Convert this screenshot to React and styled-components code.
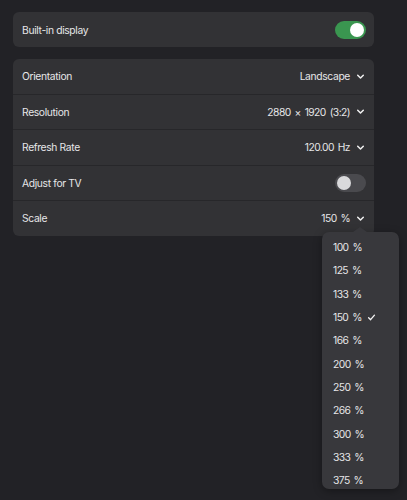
import styled, { createGlobalStyle } from "styled-components";

const Global = createGlobalStyle`
  html, body {
    margin: 0;
    padding: 0;
    background: #222226;
  }
  body {
    font-family: Inter, "Noto Sans", sans-serif;
    color: #e6e6e8;
    -webkit-font-smoothing: antialiased;
  }
`;

const Page = styled.div`
  position: relative;
  width: 407px;
  height: 500px;
  padding: 12px 13px;
  box-sizing: border-box;
  display: flex;
  flex-direction: column;
  gap: 11.5px;
`;

const Card = styled.div`
  width: 361px;
  background: #323235;
  border-radius: 6px;
  display: flex;
  flex-direction: column;
  overflow: hidden;
`;

const Row = styled.div`
  height: ${(p) => (p.$first ? "35px" : "35.5px")};
  box-sizing: border-box;
  display: flex;
  align-items: center;
  justify-content: space-between;
  padding: 0 8px 0 9px;
  font-size: 10.3px;
  letter-spacing: -0.35px;
  border-top: ${(p) => (p.$first ? "none" : "1px solid #27272a")};
`;

const Value = styled.div`
  display: flex;
  align-items: center;
  gap: 6px;
  padding-right: 1px;
  letter-spacing: ${(p) => (p.$num ? "-0.55px" : "-0.35px")};
  word-spacing: ${(p) => (p.$num ? "1.5px" : "0")};
`;

const Track = styled.div`
  width: 31px;
  height: 18px;
  border-radius: 9px;
  background: ${(p) => (p.$on ? "#3a9650" : "#4a4a4e")};
  display: flex;
  align-items: center;
  justify-content: ${(p) => (p.$on ? "flex-end" : "flex-start")};
  padding: 0 2px;
  box-sizing: border-box;
`;

const Knob = styled.div`
  width: 14px;
  height: 14px;
  border-radius: 50%;
  background: ${(p) => (p.$on ? "#ffffff" : "#d9d9db")};
`;

const Popover = styled.div`
  position: absolute;
  left: 322px;
  top: 232px;
  width: 77px;
  height: 257px;
  background: #38383c;
  border-radius: 7px;
  padding: 3.5px 0 0;
  box-sizing: border-box;
  box-shadow: 0 2px 8px rgba(0, 0, 0, 0.35);
  &::before {
    content: "";
    position: absolute;
    top: -5px;
    left: 31px;
    border-left: 7px solid transparent;
    border-right: 7px solid transparent;
    border-bottom: 5px solid #38383c;
  }
`;

const Item = styled.div`
  height: 23.3px;
  display: flex;
  align-items: center;
  gap: 5px;
  padding-left: 11px;
  font-size: 10.3px;
  letter-spacing: -0.55px;
  word-spacing: 1.5px;
`;

const Chevron = () => (
  <svg width="9" height="9" viewBox="0 0 10 10">
    <path d="M1.9 3.6 L5 6.6 L8.1 3.6" fill="none" stroke="#f0f0f0" strokeWidth="1.7" strokeLinecap="round" strokeLinejoin="round" />
  </svg>
);

const Check = () => (
  <svg width="9" height="9" viewBox="0 0 10 10">
    <path d="M1.8 5.3 L4 7.4 L8.3 2.4" fill="none" stroke="#f4f4f4" strokeWidth="1.5" strokeLinecap="round" strokeLinejoin="round" />
  </svg>
);

const Toggle = ({ on }) => (
  <Track $on={on}>
    <Knob $on={on} />
  </Track>
);

const scales = ["100", "125", "133", "150", "166", "200", "250", "266", "300", "333", "375"];

export default function App() {
  return (
    <Page>
      <Global />
      <Card>
        <Row $first>
          <span>Built-in display</span>
          <Toggle on />
        </Row>
      </Card>
      <Card>
        <Row $first>
          <span>Orientation</span>
          <Value>Landscape<Chevron /></Value>
        </Row>
        <Row>
          <span>Resolution</span>
          <Value $num>2880 × 1920 (3:2)<Chevron /></Value>
        </Row>
        <Row>
          <span>Refresh Rate</span>
          <Value $num>120.00 Hz<Chevron /></Value>
        </Row>
        <Row>
          <span>Adjust for TV</span>
          <Toggle />
        </Row>
        <Row>
          <span>Scale</span>
          <Value $num>150 %<Chevron /></Value>
        </Row>
      </Card>
      <Popover>
        {scales.map((s) => (
          <Item key={s}>
            <span>{s} %</span>
            {s === "150" && <Check />}
          </Item>
        ))}
      </Popover>
    </Page>
  );
}
